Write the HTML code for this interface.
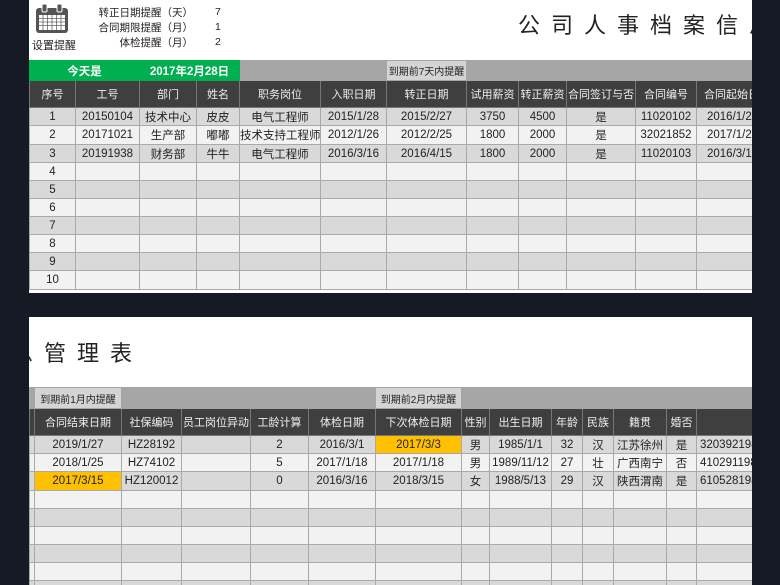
<!DOCTYPE html>
<html><head><meta charset="utf-8"><style>
*{margin:0;padding:0;box-sizing:border-box}
body{width:780px;height:585px;overflow:hidden;background:#161a24;font-family:"Liberation Sans","Noto Sans CJK SC",sans-serif;position:relative}
.panel{position:absolute;left:29px;width:723px;background:#fff;overflow:hidden}
table{border-collapse:collapse;table-layout:fixed;position:absolute}
td{text-align:center;font-size:11.5px;color:#222;border:1px solid #a9a9a9;white-space:nowrap;overflow:hidden;padding:0}
tr.h td{background:#3f3f3f;color:#eee;border-color:#777;font-size:11px}
tr.a td{background:#d9d9d9}
tr.b td{background:#f2f2f2}
.t{position:absolute;font-size:22px;color:#222;letter-spacing:11px;white-space:nowrap}
.g{background:#00b050!important;color:#fff!important;font-weight:bold;border-color:#00b050!important}
.gr{background:#a6a6a6!important;border-color:#a6a6a6!important}
.lt{background:#d4d4d4!important;font-size:10px!important;border-color:#a6a6a6!important}
.y{background:#ffc000!important}
.lab{position:absolute;font-size:10.5px;color:#222;text-align:right;width:130px;white-space:nowrap}
</style></head><body>
<div class="panel" style="top:0;height:293px">
 <svg style="position:absolute;left:6px;top:4px" width="34" height="30" viewBox="0 0 34 30">
  <rect x="1" y="4" width="32" height="25" rx="3" fill="#555"/>
  <rect x="4" y="11" width="26" height="15" fill="#fff"/>
  <g stroke="#666" stroke-width="0.8"><path d="M4 14.5H30M4 18H30M4 21.5H30M8 11V26M12.5 11V26M17 11V26M21.5 11V26M26 11V26"/></g>
  <rect x="7" y="0" width="5" height="8" rx="1.5" fill="#555" stroke="#fff"/>
  <rect x="22" y="0" width="5" height="8" rx="1.5" fill="#555" stroke="#fff"/>
 </svg>
 <div style="position:absolute;left:3px;top:37px;font-size:11px;color:#222">设置提醒</div>
 <div class="lab" style="left:34px;top:5px">转正日期提醒（天）</div>
 <div class="lab" style="left:34px;top:20px">合同期限提醒（月）</div>
 <div class="lab" style="left:34px;top:35px">体检提醒（月）</div>
 <div style="position:absolute;left:186px;top:5px;font-size:10.5px;line-height:15px;color:#222">7<br>1<br>2</div>
 <div class="t" style="left:489px;top:8px">公司人事档案信息管理表</div>
 <table style="left:0;top:60px;width:780px">
  <colgroup><col style="width:46px"><col style="width:64px"><col style="width:57px"><col style="width:43px"><col style="width:81px"><col style="width:66px"><col style="width:80px"><col style="width:52px"><col style="width:48px"><col style="width:69px"><col style="width:61px"><col style="width:113px"></colgroup>
  <tr style="height:20px"><td colspan="2" class="g">今天是</td><td colspan="2" class="g">2017年2月28日</td><td colspan="2" class="gr"></td><td class="lt">到期前7天内提醒</td><td colspan="5" class="gr"></td></tr>
  <tr class="h" style="height:27px"><td>序号</td><td>工号</td><td>部门</td><td>姓名</td><td>职务岗位</td><td>入职日期</td><td>转正日期</td><td>试用薪资</td><td>转正薪资</td><td>合同签订与否</td><td>合同编号</td><td style="text-align:left;padding-left:7px">合同起始日期</td></tr>
  <tr class="a" style="height:18px"><td>1</td><td>20150104</td><td>技术中心</td><td>皮皮</td><td>电气工程师</td><td>2015/1/28</td><td>2015/2/27</td><td>3750</td><td>4500</td><td>是</td><td>11020102</td><td style="text-align:left;padding-left:10px">2016/1/27</td></tr>
  <tr class="b" style="height:19px"><td>2</td><td>20171021</td><td>生产部</td><td>嘟嘟</td><td>技术支持工程师</td><td>2012/1/26</td><td>2012/2/25</td><td>1800</td><td>2000</td><td>是</td><td>32021852</td><td style="text-align:left;padding-left:10px">2017/1/26</td></tr>
  <tr class="a" style="height:18px"><td>3</td><td>20191938</td><td>财务部</td><td>牛牛</td><td>电气工程师</td><td>2016/3/16</td><td>2016/4/15</td><td>1800</td><td>2000</td><td>是</td><td>11020103</td><td style="text-align:left;padding-left:10px">2016/3/16</td></tr>
  <tr class="b" style="height:18px"><td>4</td><td></td><td></td><td></td><td></td><td></td><td></td><td></td><td></td><td></td><td></td><td></td></tr>
  <tr class="a" style="height:18px"><td>5</td><td></td><td></td><td></td><td></td><td></td><td></td><td></td><td></td><td></td><td></td><td></td></tr>
  <tr class="b" style="height:18px"><td>6</td><td></td><td></td><td></td><td></td><td></td><td></td><td></td><td></td><td></td><td></td><td></td></tr>
  <tr class="a" style="height:18px"><td>7</td><td></td><td></td><td></td><td></td><td></td><td></td><td></td><td></td><td></td><td></td><td></td></tr>
  <tr class="b" style="height:18px"><td>8</td><td></td><td></td><td></td><td></td><td></td><td></td><td></td><td></td><td></td><td></td><td></td></tr>
  <tr class="a" style="height:18px"><td>9</td><td></td><td></td><td></td><td></td><td></td><td></td><td></td><td></td><td></td><td></td><td></td></tr>
  <tr class="b" style="height:19px"><td>10</td><td></td><td></td><td></td><td></td><td></td><td></td><td></td><td></td><td></td><td></td><td></td></tr>
 </table>
</div>
<div class="panel" style="top:317px;height:268px">
 <div class="t" style="left:-18px;top:19px">息管理表</div>
 <table style="left:0;top:70px;width:850px">
  <colgroup><col style="width:5px"><col style="width:87px"><col style="width:60px"><col style="width:69px"><col style="width:58px"><col style="width:67px"><col style="width:86px"><col style="width:28px"><col style="width:62px"><col style="width:31px"><col style="width:31px"><col style="width:53px"><col style="width:30px"><col style="width:183px"></colgroup>
  <tr style="height:21px"><td class="gr"></td><td class="lt">到期前1月内提醒</td><td colspan="4" class="gr"></td><td class="lt">到期前2月内提醒</td><td colspan="7" class="gr"></td></tr>
  <tr class="h" style="height:27px"><td></td><td>合同结束日期</td><td>社保编码</td><td>员工岗位异动</td><td>工龄计算</td><td>体检日期</td><td>下次体检日期</td><td>性别</td><td>出生日期</td><td>年龄</td><td>民族</td><td>籍贯</td><td>婚否</td><td style="text-align:left;padding-left:55px">身份证号</td></tr>
  <tr class="a" style="height:18px"><td></td><td>2019/1/27</td><td>HZ28192</td><td></td><td>2</td><td>2016/3/1</td><td class="y">2017/3/3</td><td>男</td><td>1985/1/1</td><td>32</td><td>汉</td><td>江苏徐州</td><td>是</td><td style="text-align:left;padding-left:3px">320392198501010000</td></tr>
  <tr class="b" style="height:18px"><td></td><td>2018/1/25</td><td>HZ74102</td><td></td><td>5</td><td>2017/1/18</td><td>2017/1/18</td><td>男</td><td>1989/11/12</td><td>27</td><td>壮</td><td>广西南宁</td><td>否</td><td style="text-align:left;padding-left:3px">410291198911120000</td></tr>
  <tr class="a" style="height:19px"><td></td><td class="y">2017/3/15</td><td>HZ120012</td><td></td><td>0</td><td>2016/3/16</td><td>2018/3/15</td><td>女</td><td>1988/5/13</td><td>29</td><td>汉</td><td>陕西渭南</td><td>是</td><td style="text-align:left;padding-left:3px">610528198805130000</td></tr>
  <tr class="b" style="height:18px"><td></td><td></td><td></td><td></td><td></td><td></td><td></td><td></td><td></td><td></td><td></td><td></td><td></td><td></td></tr>
  <tr class="a" style="height:18px"><td></td><td></td><td></td><td></td><td></td><td></td><td></td><td></td><td></td><td></td><td></td><td></td><td></td><td></td></tr>
  <tr class="b" style="height:18px"><td></td><td></td><td></td><td></td><td></td><td></td><td></td><td></td><td></td><td></td><td></td><td></td><td></td><td></td></tr>
  <tr class="a" style="height:18px"><td></td><td></td><td></td><td></td><td></td><td></td><td></td><td></td><td></td><td></td><td></td><td></td><td></td><td></td></tr>
  <tr class="b" style="height:18px"><td></td><td></td><td></td><td></td><td></td><td></td><td></td><td></td><td></td><td></td><td></td><td></td><td></td><td></td></tr>
  <tr class="a" style="height:18px"><td></td><td></td><td></td><td></td><td></td><td></td><td></td><td></td><td></td><td></td><td></td><td></td><td></td><td></td></tr>
 </table>
</div>
</body></html>
